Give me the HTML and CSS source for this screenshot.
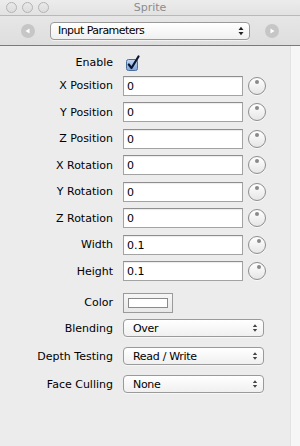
FILE: index.html
```html
<!DOCTYPE html>
<html>
<head>
<meta charset="utf-8">
<link rel="stylesheet" href="styles.css">
</head>
<body>
<div class="window">
  <div class="titlebar">
    <div class="lights"><span class="light"></span><span class="light"></span><span class="light"></span></div>
    <div class="title">Sprite</div>
  </div>
  <div class="toolbar">
    <span class="nav">
      <svg width="14" height="14" viewBox="0 0 14 14"><circle cx="7" cy="7" r="7" fill="#c6c6c6"/><path d="M4.5 7 L8.5 4.5 L8.5 9.5 Z" fill="#fff"/></svg>
    </span>
    <div class="popup popup-top"><span>Input Parameters</span><span class="updown">
      <svg width="6" height="10" viewBox="0 0 6 10"><path d="M0.5 4 L3 0.8 L5.5 4 Z M0.5 6 L3 9.2 L5.5 6 Z" fill="#222"/></svg></span></div>
    <span class="nav">
      <svg width="14" height="14" viewBox="0 0 14 14"><circle cx="7" cy="7" r="7" fill="#c6c6c6"/><path d="M9.5 7 L5.5 4.5 L5.5 9.5 Z" fill="#fff"/></svg>
    </span>
  </div>
  <div class="body">
    <div class="panel">
      <div class="row row-enable"><label>Enable</label>
        <span class="check">
          <svg width="15" height="16" viewBox="0 0 15 16"><defs><linearGradient id="cb" x1="0" y1="0" x2="0" y2="1"><stop offset="0" stop-color="#c4d8f2"/><stop offset="1" stop-color="#7fa6dc"/></linearGradient></defs><rect x="0.5" y="4.5" width="11" height="11" rx="2" fill="url(#cb)" stroke="#4d6f9e"/><path d="M2.8 9.5 L5.5 13 L12.5 1.5" fill="none" stroke="#0b1730" stroke-width="2.2" stroke-linecap="round" stroke-linejoin="round"/></svg>
        </span>
      </div>
      <div class="row"><label>X Position</label><div class="ctl"><span class="field">0</span><span class="knob"><i class="dot"></i></span></div></div>
      <div class="row"><label>Y Position</label><div class="ctl"><span class="field">0</span><span class="knob"><i class="dot"></i></span></div></div>
      <div class="row"><label>Z Position</label><div class="ctl"><span class="field">0</span><span class="knob"><i class="dot"></i></span></div></div>
      <div class="row"><label>X Rotation</label><div class="ctl"><span class="field">0</span><span class="knob"><i class="dot"></i></span></div></div>
      <div class="row"><label>Y Rotation</label><div class="ctl"><span class="field">0</span><span class="knob"><i class="dot"></i></span></div></div>
      <div class="row"><label>Z Rotation</label><div class="ctl"><span class="field">0</span><span class="knob"><i class="dot"></i></span></div></div>
      <div class="row"><label>Width</label><div class="ctl"><span class="field">0.1</span><span class="knob"><i class="dot dot-r"></i></span></div></div>
      <div class="row"><label>Height</label><div class="ctl"><span class="field">0.1</span><span class="knob"><i class="dot dot-r"></i></span></div></div>
      <div class="row row-color"><label>Color</label><span class="well"><span class="swatch"></span></span></div>
      <div class="row row-pop row-blend"><label>Blending</label><div class="popup popup-sm"><span>Over</span><span class="updown"><svg width="6" height="10" viewBox="0 0 6 10"><path d="M0.8 4 L3 1.2 L5.2 4 Z M0.8 6 L3 8.8 L5.2 6 Z" fill="#444"/></svg></span></div></div>
      <div class="row row-pop"><label>Depth Testing</label><div class="popup popup-sm"><span>Read / Write</span><span class="updown"><svg width="6" height="10" viewBox="0 0 6 10"><path d="M0.8 4 L3 1.2 L5.2 4 Z M0.8 6 L3 8.8 L5.2 6 Z" fill="#444"/></svg></span></div></div>
      <div class="row row-pop"><label>Face Culling</label><div class="popup popup-sm"><span>None</span><span class="updown"><svg width="6" height="10" viewBox="0 0 6 10"><path d="M0.8 4 L3 1.2 L5.2 4 Z M0.8 6 L3 8.8 L5.2 6 Z" fill="#444"/></svg></span></div></div>
    </div>
    <div class="scroll"></div>
  </div>
</div>
</body>
</html>
```
FILE: styles.css
```css
html, body {
  margin: 0;
  padding: 0;
}
body {
  width: 300px;
  height: 446px;
  overflow: hidden;
  font-family: "DejaVu Sans", "Noto Sans", sans-serif;
  font-size: 11px;
  color: #000;
}
.window {
  width: 300px;
  height: 446px;
  display: flex;
  flex-direction: column;
  background: #ececec;
}
.titlebar {
  height: 15px;
  border-bottom: 1px solid #b9b9b9;
  background: linear-gradient(#ececec, #e2e2e2);
  display: flex;
  align-items: center;
  position: relative;
}
.lights {
  display: flex;
  gap: 5px;
  padding-left: 6px;
}
.light {
  width: 9px;
  height: 9px;
  border-radius: 50%;
  border: 1px solid #b3b3b3;
  background: linear-gradient(#e9e9e9, #dcdcdc);
}
.title {
  position: absolute;
  left: 0;
  right: 0;
  top: 1px;
  text-align: center;
  color: #8c8c8c;
  font-size: 11px;
}
.toolbar {
  height: 29px;
  border-bottom: 1px solid #7a7a7a;
  background: linear-gradient(#e6e6e6, #dedede);
  display: flex;
  align-items: center;
  padding-left: 21px;
}
.nav {
  display: flex;
  width: 14px;
  height: 14px;
}
.popup {
  box-sizing: border-box;
  height: 18px;
  border: 1px solid #9a9a9a;
  border-radius: 4px;
  background: linear-gradient(#ffffff, #f0f0f0);
  box-shadow: 0 1px 0 rgba(255,255,255,0.6);
  display: flex;
  align-items: center;
  justify-content: space-between;
  padding: 0 5px 0 9px;
  font-size: 11px;
  letter-spacing: -0.3px;
}
.popup-top {
  width: 200px;
  margin-left: 15px;
  margin-right: 15px;
  padding-left: 7px;
  letter-spacing: -0.55px;
}
.updown {
  display: flex;
}
.body {
  flex: 1;
  display: flex;
}
.panel {
  flex: 1;
  padding-top: 6.5px;
  display: flex;
  flex-direction: column;
}
.scroll {
  width: 9px;
  border-left: 1px solid #e2e2e2;
  background: #f6f6f6;
}
.row {
  display: grid;
  grid-template-columns: 113px auto;
  column-gap: 10px;
  align-items: center;
  height: 26.5px;
}
.row label {
  text-align: right;
  white-space: nowrap;
}
.row-enable {
  height: 20px;
}
.row-color {
  height: 20px;
  margin-top: 8px;
}
.row-pop {
  height: 18px;
  margin-top: 10px;
}
.row-pop.row-blend {
  margin-top: 6.5px;
}
.check {
  display: flex;
  margin-left: 2.5px;
  margin-top: 1px;
}
.ctl {
  display: flex;
  align-items: center;
}
.field {
  box-sizing: border-box;
  width: 120px;
  height: 20px;
  border: 1px solid #a3a3a3;
  border-top-color: #8e8e8e;
  background: #fff;
  box-shadow: inset 0 1px 1px rgba(0,0,0,0.08);
  padding: 1px 0 0 3px;
  font-size: 11px;
  line-height: 17px;
}
.knob {
  position: relative;
  box-sizing: border-box;
  width: 18px;
  height: 18px;
  margin-left: 5px;
  border-radius: 50%;
  border: 1px solid #8d8d8d;
  background: linear-gradient(#ffffff, #e6e6e6);
  box-shadow: 0 1px 0 rgba(255,255,255,0.7);
}
.dot {
  position: absolute;
  width: 4px;
  height: 4px;
  border-radius: 50%;
  background: #8a8a8a;
  left: 6px;
  top: 2px;
}
.dot-r {
  left: 8px;
  top: 2px;
}
.popup-sm {
  width: 141px;
}
.well {
  box-sizing: border-box;
  width: 50px;
  height: 20px;
  border: 1px solid #9a9a9a;
  background: linear-gradient(#f6f6f6, #e8e8e8);
  display: flex;
  align-items: center;
  justify-content: center;
}
.swatch {
  box-sizing: border-box;
  width: 40px;
  height: 10px;
  border: 1px solid #8a8a8a;
  background: #fff;
}
```
